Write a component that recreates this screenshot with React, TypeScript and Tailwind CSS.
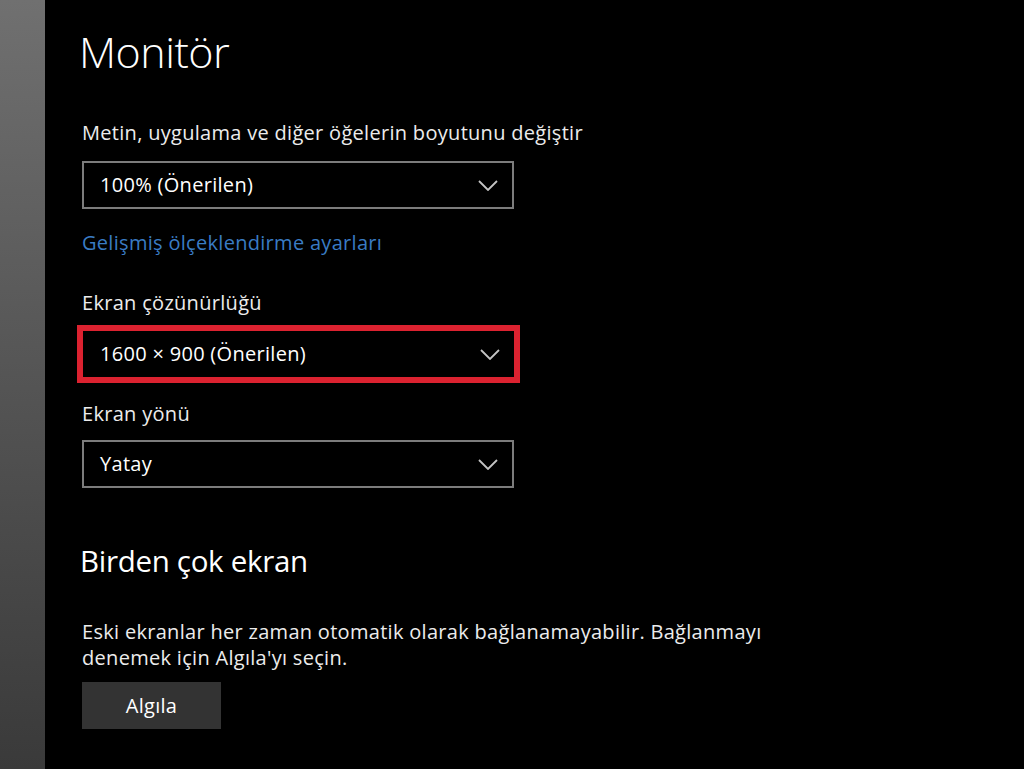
const font = { fontFamily: '"Open Sans", "Noto Sans", sans-serif' }

function Chevron() {
  return (
    <svg width="20" height="11" viewBox="0 0 20 11" fill="none" className="shrink-0">
      <polyline points="1,1 10,10 19,1" stroke="#c4c4c4" strokeWidth="1.8" />
    </svg>
  )
}

function Select({ value, highlighted = false }: { value: string; highlighted?: boolean }) {
  return (
    <div
      className={[
        'flex items-center justify-between',
        highlighted
          ? 'border-[6px] border-[#dc2230] -ml-[5px] w-[443px] h-[58px] pl-[17px] pr-[14px]'
          : 'border-2 border-[#7c7c7c] w-[432px] h-[48px] pl-[16px] pr-[14px]',
      ].join(' ')}
    >
      <span className="text-[20px] text-white tracking-[0.3px]">{value}</span>
      <Chevron />
    </div>
  )
}

export default function App() {
  return (
    <div className="flex w-[1024px] h-[769px] bg-black overflow-hidden" style={font}>
      <div className="w-[45px] h-full bg-gradient-to-b from-[#707070] to-[#3a3a3a]" />

      <div className="flex flex-col pl-[37px] pt-[26px]">
        <h1 className="text-[43px] font-light text-white leading-[52px] -ml-[3px] tracking-[-0.5px]">Monitör</h1>

        <p className="mt-[42px] text-[20px] text-[#ececec] leading-[26px] tracking-[0.3px]">
          Metin, uygulama ve diğer öğelerin boyutunu değiştir
        </p>
        <div className="mt-[15px]">
          <Select value="100% (Önerilen)" />
        </div>

        <a className="mt-[21px] text-[20px] text-[#3a7cc4] leading-[26px] tracking-[0.3px]">
          Gelişmiş ölçeklendirme ayarları
        </a>

        <p className="mt-[34px] text-[20px] text-[#ececec] leading-[26px] tracking-[0.3px]">Ekran çözünürlüğü</p>
        <div className="mt-[9px]">
          <Select value="1600 × 900 (Önerilen)" highlighted />
        </div>

        <p className="mt-[18px] text-[20px] text-[#ececec] leading-[26px] tracking-[0.3px]">Ekran yönü</p>
        <div className="mt-[13px]">
          <Select value="Yatay" />
        </div>

        <h2 className="mt-[55px] text-[29.5px] text-white leading-[36px] -ml-[2px] tracking-[-0.3px]">Birden çok ekran</h2>

        <p className="mt-[40px] w-[700px] text-[20px] text-[#ececec] leading-[26px] tracking-[0.3px]">
          Eski ekranlar her zaman otomatik olarak bağlanamayabilir. Bağlanmayı denemek için Algıla'yı seçin.
        </p>

        <button className="mt-[11px] w-[139px] h-[47px] bg-[#333333] text-[20px] text-white tracking-[0.3px]">
          Algıla
        </button>
      </div>
    </div>
  )
}
